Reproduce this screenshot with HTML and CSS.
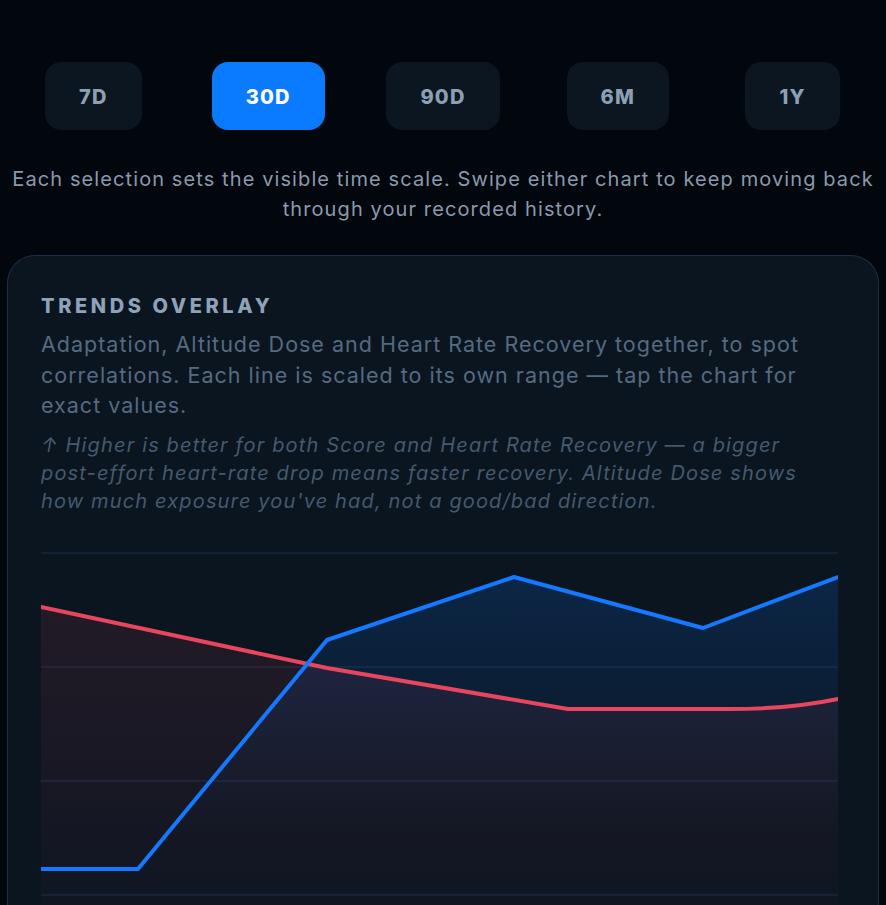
FILE: index.html
```html
<!DOCTYPE html>
<html lang="en">
<head>
  <meta charset="UTF-8">
  <meta name="viewport" content="width=device-width, initial-scale=1.0">
  <title>Trends</title>
  <link rel="stylesheet" href="styles.css">
</head>
<body>

<div class="range-picker">
  <div class="range-slot"><button class="range-btn">7D</button></div>
  <div class="range-slot"><button class="range-btn active">30D</button></div>
  <div class="range-slot"><button class="range-btn">90D</button></div>
  <div class="range-slot"><button class="range-btn">6M</button></div>
  <div class="range-slot"><button class="range-btn">1Y</button></div>
</div>

<p class="range-hint">Each selection sets the visible time scale. Swipe either chart to keep moving back through your recorded history.</p>

<div class="card">
  <h2 class="card-title">TRENDS OVERLAY</h2>
  <p class="card-text">Adaptation, Altitude Dose and Heart Rate Recovery together, to spot correlations. Each line is scaled to its own range — tap the chart for exact values.</p>
  <p class="card-note">↑ Higher is better for both Score and Heart Rate Recovery — a bigger post-effort heart-rate drop means faster recovery. Altitude Dose shows how much exposure you've had, not a good/bad direction.</p>

  <svg class="chart" width="797" height="370" viewBox="0 0 797 370">
    <defs>
      <linearGradient id="redFill" x1="0" y1="0" x2="0" y2="1">
        <stop offset="0" stop-color="#e8455e" stop-opacity="0.11"/>
        <stop offset="1" stop-color="#e8455e" stop-opacity="0.02"/>
      </linearGradient>
      <linearGradient id="blueFill" x1="0" y1="0" x2="0" y2="1">
        <stop offset="0" stop-color="#1479ff" stop-opacity="0.17"/>
        <stop offset="0.75" stop-color="#1479ff" stop-opacity="0"/>
      </linearGradient>
    </defs>

    <!-- grid -->
    <g class="grid">
      <line x1="0" y1="1" x2="797" y2="1"/>
      <line x1="0" y1="115" x2="797" y2="115"/>
      <line x1="0" y1="229" x2="797" y2="229"/>
      <line x1="0" y1="343" x2="797" y2="343"/>
    </g>

    <!-- altitude dose -->
    <path d="M0 55 L286 116 L527 157 L689 157 Q750 157 797 147 L797 370 L0 370 Z" fill="url(#redFill)"/>
    <!-- adaptation score -->
    <path d="M0 317 L97 317 L286 88 L473 25 L662 76 L797 25 L797 370 L0 370 Z" fill="url(#blueFill)"/>

    <path class="line red" d="M0 55 L286 116 L527 157 L689 157 Q750 157 797 147"/>
    <path class="line blue" d="M0 317 L97 317 L286 88 L473 25 L662 76 L797 25"/>
  </svg>
</div>

</body>
</html>
```

FILE: styles.css
```css
body {
  margin: 0;
  background: #02060d;
  font-family: Inter, "Liberation Sans", sans-serif;
  overflow: hidden;
}

.range-picker {
  display: flex;
  padding: 0 6px;
  margin-top: 62px;
}

.range-slot {
  flex: 1;
  display: flex;
  justify-content: center;
}

.range-btn {
  height: 68px;
  padding: 2px 34px 0;
  border: none;
  border-radius: 16px;
  background: #0b1621;
  color: #8c9fb5;
  font-family: inherit;
  font-size: 20px;
  font-weight: 800;
  letter-spacing: 1.2px;
}

.range-btn.active {
  background: #0a7aff;
  color: #fff;
}

.range-hint {
  margin: 35px 6px 0;
  text-align: center;
  font-size: 20px;
  line-height: 29.5px;
  letter-spacing: 1.1px;
  color: #8a9aac;
}

.card {
  margin: 31px 7px 0;
  padding: 38px 40px 0 33px;
  border: 1.5px solid #1b2f45;
  border-bottom: none;
  border-radius: 28px 28px 0 0;
  background: #0a1520;
  height: 700px;
}

.card-title {
  margin: 0;
  font-size: 20px;
  line-height: 24px;
  font-weight: 800;
  letter-spacing: 3.6px;
  color: #8ea2b9;
}

.card-text {
  margin: 11px 0 0;
  font-size: 21.5px;
  line-height: 30.5px;
  letter-spacing: 1px;
  color: #566a80;
}

.card-note {
  margin: 10px 0 0;
  font-size: 20px;
  line-height: 28px;
  font-style: italic;
  letter-spacing: 1.15px;
  color: #46596d;
}

.chart {
  display: block;
  margin-top: 37px;
}

.grid line {
  stroke: #15263a;
  stroke-width: 1.5;
}

.line {
  fill: none;
  stroke-width: 4;
  stroke-linecap: round;
  stroke-linejoin: round;
}

.line.red {
  stroke: #e8455e;
}

.line.blue {
  stroke: #1479ff;
}
```
